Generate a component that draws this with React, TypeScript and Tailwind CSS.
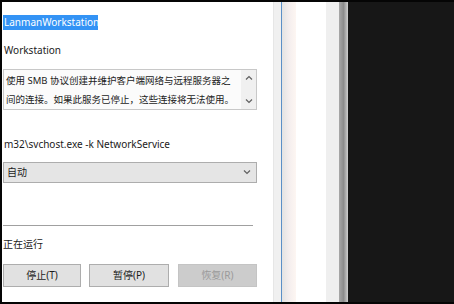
import React from 'react'

const FONT = { fontFamily: '"Noto Sans", "Noto Sans CJK SC", sans-serif' }

function Chevron({ up = false }: { up?: boolean }) {
  return (
    <svg width="8" height="5" viewBox="0 0 8 5" aria-hidden="true">
      <polyline
        points={up ? '1,4.5 4,1.5 7,4.5' : '1,0.5 4,3.5 7,0.5'}
        fill="none"
        stroke="#606060"
        strokeWidth="1.2"
      />
    </svg>
  )
}

function DialogPanel() {
  return (
    <div className="w-[271px] h-full bg-white flex flex-col pl-[1px] text-[10px] text-[#1b1b1b]" style={FONT}>
      <div className="mt-[13px] h-[15px] w-[95px] bg-[#3393f5] text-white leading-[15px] pl-[1px]">
        LanmanWorkstation
      </div>
      <div className="mt-[13px] h-[14px] leading-[14px] pl-[1px]">Workstation</div>
      <div className="mt-[12px] h-[41px] w-[254px] border border-[#c8c8c8] bg-[#fbfbfb] flex">
        <div className="flex-1 pl-[2px] pt-[1px] text-[9.5px] leading-[19px] whitespace-nowrap overflow-hidden">
          <div>使用 SMB 协议创建并维护客户端网络与远程服务器之</div>
          <div>间的连接。如果此服务已停止，这些连接将无法使用。</div>
        </div>
        <div className="w-[15px] shrink-0 bg-[#f0f0f0] flex flex-col items-center justify-between py-[5px]">
          <Chevron up />
          <Chevron />
        </div>
      </div>
      <div className="mt-[27px] h-[14px] leading-[14px] pl-[1px] whitespace-nowrap">
        m32\svchost.exe -k NetworkService
      </div>
      <div className="mt-[11px] h-[21px] w-[254px] border border-[#adadad] bg-[#e5e5e5] flex items-center justify-between pl-[3px] pr-[5px]">
        <span>自动</span>
        <Chevron />
      </div>
      <div className="mt-[42px] h-px w-[250px] bg-[#a0a0a0]" />
      <div className="mt-[11px] h-[14px] leading-[14px]">正在运行</div>
      <div className="mt-[13px] flex gap-[7px] w-[254px]">
        <div className="w-[79px] h-[23px] border border-[#adadad] bg-[#e1e1e1] flex items-center justify-center">
          停止(T)
        </div>
        <div className="w-[81px] h-[23px] border border-[#adadad] bg-[#e1e1e1] flex items-center justify-center ml-[1px]">
          暂停(P)
        </div>
        <div className="w-[80px] h-[23px] border border-[#c4c4c4] bg-[#cccccc] text-[#9a9a9a] flex items-center justify-center ml-[2px]">
          恢复(R)
        </div>
      </div>
    </div>
  )
}

export default function App() {
  return (
    <div className="w-[454px] h-[304px] bg-[#050505] flex flex-col overflow-hidden">
      <div className="mt-[2px] h-[300px] flex">
        <div className="w-[2px] bg-[#050505]" />
        <DialogPanel />
        <div className="w-[8px] bg-[#f0f0f0] border-l border-[#e6e6e6]" />
        <div className="w-[1px] bg-[#5b8fc7]" />
        <div className="w-[14px] bg-gradient-to-r from-[#e3e3e3] via-[#f4eeee] to-[#fdf6f2]" />
        <div className="w-[30px] bg-white" />
        <div className="w-[13px] bg-[#efefef]" />
        <div className="w-[9px] bg-gradient-to-r from-[#a8a8a8] via-[#8c8c8c] to-[#d0d0d0]" />
        <div className="flex-1 bg-[#171717]" />
      </div>
    </div>
  )
}
